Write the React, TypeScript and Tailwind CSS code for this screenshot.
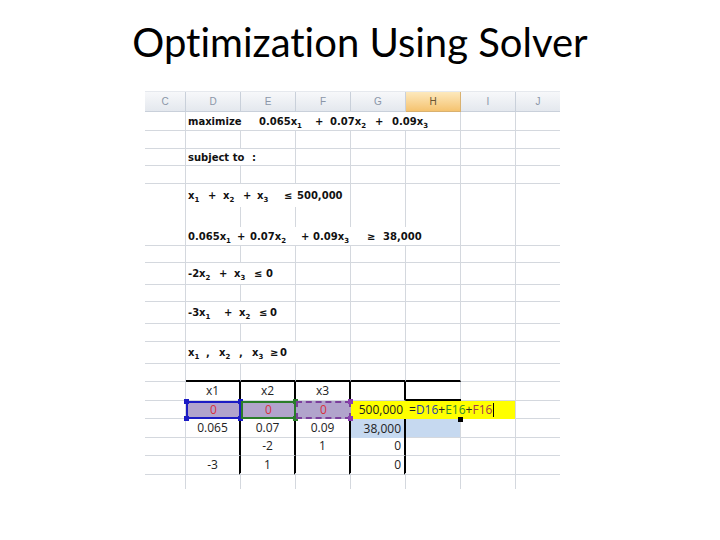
import type { ReactNode } from "react";

const cols = "grid grid-cols-[41px_55px_55px_55px_55px_55px_55px_44px]";
const gl = "border-[#d4d8de]";
const eq = "font-['DejaVu_Sans',sans-serif] font-bold text-[10px] text-[#111]";
const num = "font-['Open_Sans',sans-serif] text-[12px] text-[#222]";

const spans: Record<number, string> = {
  1: "",
  2: "col-span-2",
  3: "col-span-3",
  5: "col-span-5",
};

function X({ n }: { n: number }) {
  return (
    <span>
      x<span className="relative top-[3px] text-[7px]">{n}</span>
    </span>
  );
}

type Tok = [number, ReactNode];

function TextRow({
  h,
  span,
  toks,
  noBottom = false,
}: {
  h: string;
  span: number;
  toks: Tok[];
  noBottom?: boolean;
}) {
  const b = noBottom ? "" : "border-b";
  const rest = 7 - span;
  return (
    <div className={`${cols} ${h}`}>
      <div className={`border-r ${b} ${gl}`} />
      <div className={`${spans[span]} border-r ${b} ${gl} flex items-center pl-[2px] whitespace-nowrap ${eq}`}>
        {toks.map(([w, t], i) => (
          <span key={i} className="shrink-0" style={w ? { width: w } : undefined}>
            {t}
          </span>
        ))}
      </div>
      {Array.from({ length: rest }).map((_, i) => (
        <div key={i} className={`${i === rest - 1 ? "" : "border-r"} ${b} ${gl}`} />
      ))}
    </div>
  );
}

function BlankRow({ h, noBottom = false }: { h: string; noBottom?: boolean }) {
  const b = noBottom ? "" : "border-b";
  return (
    <div className={`${cols} ${h}`}>
      {Array.from({ length: 8 }).map((_, i) => (
        <div key={i} className={`${i === 7 ? "" : "border-r"} ${b} ${gl}`} />
      ))}
    </div>
  );
}

function Header() {
  const letters = ["C", "D", "E", "F", "G", "H", "I", "J"];
  return (
    <div className={`${cols} h-[21px] border-t border-[#e6e9ee]`}>
      {letters.map((l) =>
        l === "H" ? (
          <div
            key={l}
            className="flex items-center justify-center border-r border-b border-[#d9b170] bg-gradient-to-b from-[#fde9bd] to-[#f5c36f] font-['Liberation_Sans',sans-serif] text-[10px] text-[#6a5533]"
          >
            {l}
          </div>
        ) : (
          <div
            key={l}
            className={`flex items-center justify-center ${l === "J" ? "" : "border-r"} border-b border-[#c9d0da] bg-gradient-to-b from-[#f7f8fa] to-[#e4e8ee] font-['Liberation_Sans',sans-serif] text-[10px] text-[#8a96a8]`}
          >
            {l}
          </div>
        )
      )}
    </div>
  );
}

function Corner({ pos, color }: { pos: string; color: string }) {
  return <span className={`absolute w-[5px] h-[5px] ${pos} ${color}`} />;
}

function Sel({ kind }: { kind: "d" | "e" | "f" }) {
  if (kind === "d")
    return (
      <>
        <span className="absolute inset-0 border-2 border-[#1c1cc4]" />
        <Corner pos="-top-[2px] -left-[2px]" color="bg-[#1c1cc4]" />
        <Corner pos="-top-[2px] -right-[2px]" color="bg-[#1c1cc4]" />
        <Corner pos="-bottom-[2px] -left-[2px]" color="bg-[#1c1cc4]" />
        <Corner pos="-bottom-[2px] -right-[2px]" color="bg-[#1c1cc4]" />
      </>
    );
  if (kind === "e")
    return (
      <>
        <span className="absolute inset-0 border-2 border-[#2a7d2a]" />
        <Corner pos="-top-[2px] -right-[2px]" color="bg-[#2a7d2a]" />
        <Corner pos="-bottom-[2px] -right-[2px]" color="bg-[#2a7d2a]" />
      </>
    );
  return (
    <>
      <span className="absolute inset-0 border-2 border-dashed border-[#7b3f9c]" />
      <Corner pos="-top-[2px] -right-[2px]" color="bg-[#8a3fb0]" />
      <Corner pos="-bottom-[2px] -right-[2px]" color="bg-[#8a3fb0]" />
    </>
  );
}

export default function App() {
  const blk = "border-r-2 border-r-black";
  const c = `flex items-center justify-center ${num}`;
  const r = `flex items-center justify-end pr-[3px] ${num}`;
  return (
    <div className="w-[720px] h-[540px] bg-white overflow-hidden">
      <h1 className="h-[92px] pt-[18px] text-center leading-[48px] text-[40px] text-black font-['Lato',sans-serif] [font-variant-ligatures:none]">
        Optimization Using Solver
      </h1>

      <div className="ml-[145px] -mt-[1px] w-[415px]">
        <Header />
        <TextRow
          h="h-[19px]"
          span={5}
          toks={[
            [71, "maximize"],
            [56, <>0.065<X n={1} /></>],
            [15, "+"],
            [45, <>0.07<X n={2} /></>],
            [17, "+"],
            [0, <>0.09<X n={3} /></>],
          ]}
        />
        <BlankRow h="h-[18px]" />
        <TextRow h="h-[17px]" span={2} toks={[[64, "subject to"], [0, ":"]]} />
        <BlankRow h="h-[18px]" />
        <TextRow
          h="h-[23px]"
          span={3}
          noBottom
          toks={[
            [20, <X n={1} />],
            [15, "+"],
            [20, <X n={2} />],
            [14, "+"],
            [27, <X n={3} />],
            [13, "≤"],
            [0, "500,000"],
          ]}
        />
        <BlankRow h="h-[20px]" noBottom />
        <TextRow
          h="h-[19px]"
          span={5}
          toks={[
            [49, <>0.065<X n={1} /></>],
            [13, "+"],
            [51, <>0.07<X n={2} /></>],
            [12, "+"],
            [54, <>0.09<X n={3} /></>],
            [16, "≥"],
            [0, "38,000"],
          ]}
        />
        <BlankRow h="h-[17px]" />
        <TextRow
          h="h-[22px]"
          span={2}
          toks={[
            [31, <>-2<X n={2} /></>],
            [15, "+"],
            [20, <X n={3} />],
            [12, "≤"],
            [0, "0"],
          ]}
        />
        <BlankRow h="h-[17px]" />
        <TextRow
          h="h-[22px]"
          span={2}
          toks={[
            [36, <>-3<X n={1} /></>],
            [15, "+"],
            [20, <X n={2} />],
            [11, "≤"],
            [0, "0"],
          ]}
        />
        <BlankRow h="h-[18px]" />
        <TextRow
          h="h-[22px]"
          span={3}
          toks={[
            [18, <X n={1} />],
            [13, ","],
            [20, <X n={2} />],
            [13, ","],
            [18, <X n={3} />],
            [10, "≥"],
            [0, "0"],
          ]}
        />

        {/* row above the table: black bottom edge under D..H */}
        <div className={`${cols} h-[18px]`}>
          <div className={`border-r border-b ${gl}`} />
          <div className={`border-r ${gl} border-b-2 border-b-black`} />
          <div className={`border-r ${gl} border-b-2 border-b-black`} />
          <div className={`border-r ${gl} border-b-2 border-b-black`} />
          <div className={`border-r ${gl} border-b-2 border-b-black`} />
          <div className={`border-r ${gl} border-b-2 border-b-black`} />
          <div className={`border-r border-b ${gl}`} />
          <div className={`border-b ${gl}`} />
        </div>

        {/* x1 x2 x3 */}
        <div className={`${cols} h-[19px]`}>
          <div className={`border-r border-b ${gl}`} />
          <div className={`${c} border-b ${gl} ${blk}`}>x1</div>
          <div className={`${c} border-b ${gl} ${blk}`}>x2</div>
          <div className={`${c} border-b ${gl} ${blk}`}>x3</div>
          <div className={`border-b ${gl} ${blk}`} />
          <div className={`border-r border-b ${gl}`} />
          <div className={`border-r border-b ${gl}`} />
          <div className={`border-b ${gl}`} />
        </div>

        {/* decision variables */}
        <div className={`${cols} h-[18px]`}>
          <div className={`border-r border-b ${gl}`} />
          <div className={`relative ${c} bg-[#b1a4cc] text-[#d8313c]`}>
            0
            <Sel kind="d" />
          </div>
          <div className={`relative ${c} bg-[#b1a4cc] text-[#d8313c]`}>
            0
            <Sel kind="e" />
          </div>
          <div className={`relative ${c} bg-[#b1a4cc] text-[#d8313c]`}>
            0
            <Sel kind="f" />
          </div>
          <div className={`${r} bg-[#ffff00]`}>500,000</div>
          <div className={`relative col-span-2 flex items-center pl-[3px] bg-[#ffff00] border-r ${gl} ${num}`}>
            <span className="absolute top-[-2px] left-0 w-[55px] h-[2px] bg-black" />
            <span className="absolute -bottom-[3px] left-[52px] w-[5px] h-[5px] bg-black" />
            <span>=</span>
            <span className="text-[#1f3fa8]">D16</span>
            <span>+</span>
            <span className="text-[#2f8a2f]">E16</span>
            <span>+</span>
            <span className="text-[#a3364f]">F16</span>
            <span className="ml-[1px] w-[1px] h-[14px] bg-black" />
          </div>
          <div className={`border-b ${gl}`} />
        </div>

        {/* objective coefficients */}
        <div className={`${cols} h-[18px]`}>
          <div className={`border-r border-b ${gl}`} />
          <div className={`${c} border-b ${gl} ${blk}`}>0.065</div>
          <div className={`${c} border-b ${gl} ${blk}`}>0.07</div>
          <div className={`${c} border-b ${gl} ${blk}`}>0.09</div>
          <div className={`${r} bg-[#c6d9f0] ${blk}`}>38,000</div>
          <div className={`bg-[#c6d9f0] border-r border-b ${gl}`} />
          <div className={`border-r border-b ${gl}`} />
          <div className={`border-b ${gl}`} />
        </div>

        <div className={`${cols} h-[19px]`}>
          <div className={`border-r border-b ${gl}`} />
          <div className={`border-b ${gl} ${blk}`} />
          <div className={`${c} border-b ${gl} ${blk}`}>-2</div>
          <div className={`${c} border-b ${gl} ${blk}`}>1</div>
          <div className={`${r} border-b ${gl} ${blk}`}>0</div>
          <div className={`border-r border-b ${gl}`} />
          <div className={`border-r border-b ${gl}`} />
          <div className={`border-b ${gl}`} />
        </div>

        <div className={`${cols} h-[17px]`}>
          <div className={`border-r border-b ${gl}`} />
          <div className={`${c} border-b ${gl} ${blk}`}>-3</div>
          <div className={`${c} border-b ${gl} ${blk}`}>1</div>
          <div className={`border-b ${gl} ${blk}`} />
          <div className={`${r} border-b ${gl} ${blk}`}>0</div>
          <div className={`border-r border-b ${gl}`} />
          <div className={`border-r border-b ${gl}`} />
          <div className={`border-b ${gl}`} />
        </div>

        <BlankRow h="h-[16px]" noBottom />
      </div>
    </div>
  );
}
